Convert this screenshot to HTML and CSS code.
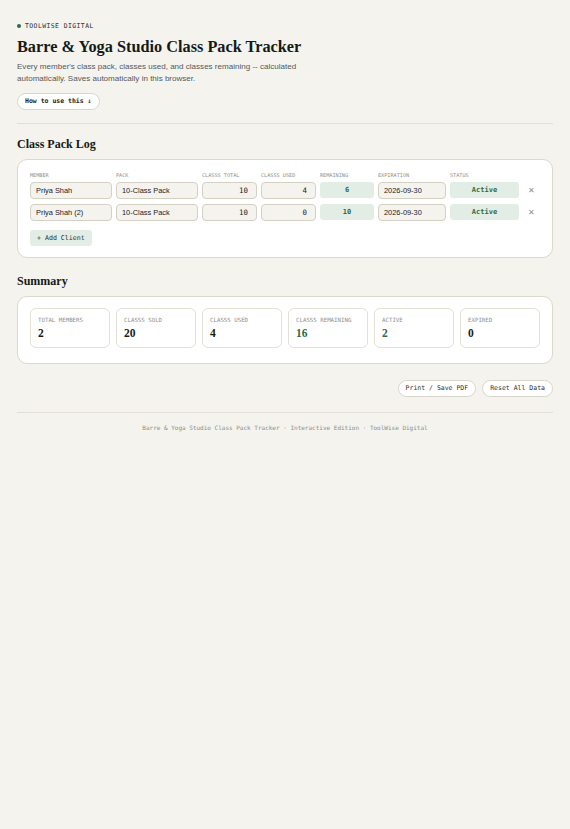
FILE: index.html
```
<!DOCTYPE html>
<html>

<head>
    <title>Barre &amp; Yoga Studio Class Pack Tracker</title>
    <link rel="stylesheet" href="styles.css">
</head>

<body>
    <div class="page">
        <div class="eyebrow"><span class="dot"></span>TOOLWISE DIGITAL</div>
        <h1>Barre &amp; Yoga Studio Class Pack Tracker</h1>
        <p class="lead">Every member's class pack, classes used, and classes remaining -- calculated automatically. Saves automatically in this browser.</p>
        <button class="pill pill-bold">How to use this &#8595;</button>

        <hr class="rule">

        <h2>Class Pack Log</h2>
        <div class="card log-card">
            <div class="log-row log-head">
                <div>Member</div>
                <div>Pack</div>
                <div>Classs Total</div>
                <div>Classs Used</div>
                <div>Remaining</div>
                <div>Expiration</div>
                <div>Status</div>
                <div></div>
            </div>
            <div class="log-row">
                <input class="field" type="text" value="Priya Shah">
                <input class="field" type="text" value="10-Class Pack">
                <input class="field num" type="text" value="10">
                <input class="field num" type="text" value="4">
                <div class="badge">6</div>
                <input class="field" type="text" value="2026-09-30">
                <div class="badge">Active</div>
                <div class="remove">&#10005;</div>
            </div>
            <div class="log-row">
                <input class="field" type="text" value="Priya Shah (2)">
                <input class="field" type="text" value="10-Class Pack">
                <input class="field num" type="text" value="10">
                <input class="field num" type="text" value="0">
                <div class="badge">10</div>
                <input class="field" type="text" value="2026-09-30">
                <div class="badge">Active</div>
                <div class="remove">&#10005;</div>
            </div>
            <button class="add-btn">+ Add Client</button>
        </div>

        <h2>Summary</h2>
        <div class="card summary-card">
            <div class="stats">
                <div class="stat"><div class="stat-label">Total Members</div><div class="stat-value">2</div></div>
                <div class="stat"><div class="stat-label">Classs Sold</div><div class="stat-value">20</div></div>
                <div class="stat"><div class="stat-label">Classs Used</div><div class="stat-value">4</div></div>
                <div class="stat"><div class="stat-label">Classs Remaining</div><div class="stat-value green">16</div></div>
                <div class="stat"><div class="stat-label">Active</div><div class="stat-value green">2</div></div>
                <div class="stat"><div class="stat-label">Expired</div><div class="stat-value">0</div></div>
            </div>
        </div>

        <div class="actions">
            <button class="pill">Print / Save PDF</button>
            <button class="pill">Reset All Data</button>
        </div>

        <hr class="rule">

        <div class="footer">Barre &amp; Yoga Studio Class Pack Tracker · Interactive Edition · ToolWise Digital</div>
    </div>
</body>

</html>
```

FILE: styles.css
```
body {
    margin: 0;
    padding: 0;
    background-color: #f4f3ee;
    color: #1d211e;
    font-family: "Liberation Sans", Arial, sans-serif;
}

.page {
    padding: 22px 17px 40px;
}

.eyebrow {
    display: flex;
    align-items: center;
    gap: 4px;
    font-family: "DejaVu Sans Mono", monospace;
    font-size: 6.4px;
    letter-spacing: 0.07em;
    color: #2a2f2b;
}

.dot {
    width: 4px;
    height: 4px;
    border-radius: 50%;
    background-color: #2f6b45;
}

h1 {
    font-family: "Liberation Serif", serif;
    font-size: 16.3px;
    font-weight: bold;
    margin: 7px 0 4px;
    color: #161a17;
}

.lead {
    font-size: 8.05px;
    line-height: 12px;
    color: #55595a;
    margin: 0 0 4px;
    max-width: 300px;
}

button {
    font-family: "DejaVu Sans Mono", monospace;
    cursor: pointer;
}

.pill {
    background-color: #ffffff;
    border: 1px solid #d9d6cb;
    border-radius: 10px;
    font-size: 6.5px;
    padding: 0 7px;
    height: 17px;
    color: #2a2f2b;
}

.pill-bold {
    font-weight: bold;
    color: #1d211e;
}

.rule {
    border: none;
    border-top: 1px solid #e1dfd7;
    margin: 13px 0 0;
}

h2 {
    font-family: "Liberation Serif", serif;
    font-size: 12px;
    font-weight: bold;
    margin: 13px 0 7px;
    color: #161a17;
}

.card {
    background-color: #ffffff;
    border: 1.5px solid #dcd8cb;
    border-radius: 10px;
    padding: 12px 12px 11px;
}

.log-card {
    margin-bottom: 16px;
}

.summary-card {
    padding-top: 11px;
    padding-bottom: 15px;
}

/* Log table */
.log-row {
    display: grid;
    grid-template-columns: 82px 82px 55px 55px 54px 68px 69px 1fr;
    gap: 4px;
    align-items: center;
    margin-bottom: 5px;
}

.log-head {
    font-family: "DejaVu Sans Mono", monospace;
    font-size: 5.2px;
    text-transform: uppercase;
    color: #8d908b;
    margin-bottom: 4px;
}

.field {
    box-sizing: border-box;
    width: 100%;
    height: 17px;
    padding: 0 5px;
    font-family: "Liberation Sans", Arial, sans-serif;
    font-size: 7.4px;
    color: #1d211e;
    background-color: #f5f3ee;
    border: 1px solid #d4d0c4;
    border-radius: 4px;
}

.field.num {
    text-align: right;
    font-family: "DejaVu Sans Mono", monospace;
    padding-right: 8px;
}

.badge {
    height: 16px;
    line-height: 16px;
    text-align: center;
    background-color: #e2eee5;
    border-radius: 3px;
    font-family: "DejaVu Sans Mono", monospace;
    font-size: 7px;
    font-weight: bold;
    color: #2f6b45;
}

.remove {
    text-align: center;
    font-size: 8px;
    color: #8d908b;
}

.add-btn {
    margin-top: 3px;
    height: 16px;
    padding: 0 7px;
    background-color: #e2eee5;
    border: none;
    border-radius: 3px;
    font-size: 6.6px;
    color: #2a2f2b;
}

/* Summary */
.stats {
    display: grid;
    grid-template-columns: repeat(6, 1fr);
    gap: 6px;
}

.stat {
    border: 1px solid #e3e0d6;
    border-radius: 6px;
    padding: 8px 7px 6px;
    height: 24px;
}

.stat-label {
    font-family: "DejaVu Sans Mono", monospace;
    font-size: 5.75px;
    text-transform: uppercase;
    color: #8d908b;
    margin-bottom: 4px;
}

.stat-value {
    font-family: "Liberation Serif", serif;
    font-size: 11.5px;
    font-weight: bold;
    color: #161a17;
}

.stat-value.green {
    color: #2f6b45;
}

.actions {
    display: flex;
    justify-content: flex-end;
    gap: 6px;
    margin: 16px 0 15px;
}

.footer {
    text-align: center;
    font-family: "DejaVu Sans Mono", monospace;
    font-size: 6px;
    color: #8d908b;
    margin-top: 11px;
}
```
